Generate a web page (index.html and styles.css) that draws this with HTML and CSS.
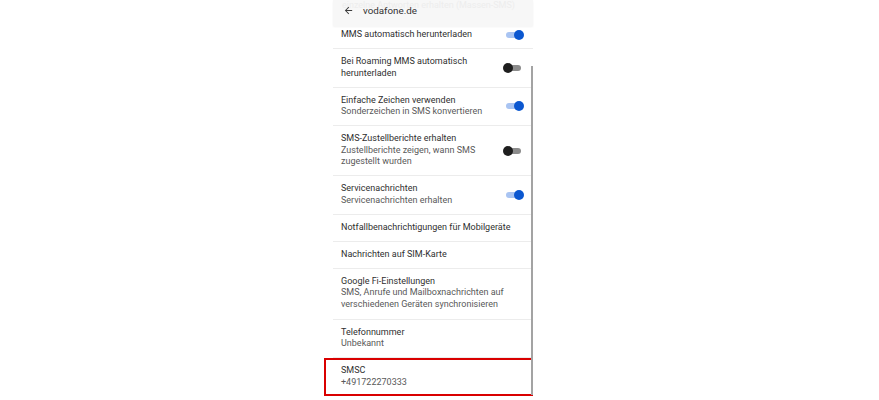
FILE: index.html
```html
<!DOCTYPE html>
<html lang="de">
<head>
<meta charset="utf-8">
<title>SMS-Einstellungen</title>
<link rel="stylesheet" href="styles.css">
</head>
<body>
<div class="stage">
  <div class="screen">
    <header class="appbar">
      <div class="ghost">einzelne Antworten erhalten (Massen-SMS)</div>
      <svg class="back" viewBox="0 0 24 24" width="11" height="11"><path d="M20 11H7.83l5.59-5.59L12 4l-8 8 8 8 1.41-1.41L7.83 13H20v-2z" fill="#3c3c3c"/></svg>
      <span class="title">vodafone.de</span>
    </header>
    <div class="list">
      <div class="row">
        <div class="text"><div class="t">MMS automatisch herunterladen</div></div>
        <span class="toggle on"><span class="track"></span><span class="thumb"></span></span>
      </div>
      <div class="row">
        <div class="text"><div class="t">Bei Roaming MMS automatisch herunterladen</div></div>
        <span class="toggle"><span class="track"></span><span class="thumb"></span></span>
      </div>
      <div class="row">
        <div class="text"><div class="t">Einfache Zeichen verwenden</div><div class="s">Sonderzeichen in SMS konvertieren</div></div>
        <span class="toggle on"><span class="track"></span><span class="thumb"></span></span>
      </div>
      <div class="row">
        <div class="text"><div class="t">SMS-Zustellberichte erhalten</div><div class="s">Zustellberichte zeigen, wann SMS zugestellt wurden</div></div>
        <span class="toggle"><span class="track"></span><span class="thumb"></span></span>
      </div>
      <div class="row">
        <div class="text"><div class="t">Servicenachrichten</div><div class="s">Servicenachrichten erhalten</div></div>
        <span class="toggle on"><span class="track"></span><span class="thumb"></span></span>
      </div>
      <div class="row">
        <div class="text"><div class="t">Notfallbenachrichtigungen für Mobilgeräte</div></div>
      </div>
      <div class="row">
        <div class="text"><div class="t">Nachrichten auf SIM-Karte</div></div>
      </div>
      <div class="row tall">
        <div class="text"><div class="t">Google Fi-Einstellungen</div><div class="s">SMS, Anrufe und Mailboxnachrichten auf verschiedenen Geräten synchronisieren</div></div>
      </div>
      <div class="row">
        <div class="text"><div class="t">Telefonnummer</div><div class="s">Unbekannt</div></div>
      </div>
      <div class="row marked">
        <div class="text"><div class="t">SMSC</div><div class="s">+491722270333</div></div>
      </div>
    </div>
    <div class="scrollbar"></div>
  </div>
</div>
</body>
</html>
```
FILE: styles.css
```css
html, body {
  margin: 0;
  padding: 0;
  background: #ffffff;
}
body {
  font-family: Roboto, "Noto Sans", "Liberation Sans", sans-serif;
  color: #2a2a2a;
}
.stage {
  width: 879px;
  height: 400px;
  overflow: hidden;
  display: flex;
  justify-content: flex-start;
  padding-left: 333px;
  box-sizing: border-box;
}
.screen {
  position: relative;
  width: 200px;
  height: 400px;
  background: #ffffff;
}
.appbar {
  position: absolute;
  top: 0;
  left: 0;
  right: 0;
  height: 26px;
  box-sizing: border-box;
  display: flex;
  align-items: center;
  padding: 0 0 6px 10px;
  background: rgba(247, 247, 247, 0.94);
  box-shadow: 0 1px 2px rgba(0, 0, 0, 0.05);
  z-index: 2;
  overflow: hidden;
}
.ghost {
  position: absolute;
  left: 9px;
  top: 0;
  font-size: 9px;
  line-height: 11px;
  color: #ededed;
  white-space: nowrap;
}
.back {
  position: relative;
  display: block;
  flex: none;
}
.title {
  position: relative;
  margin-left: 9px;
  font-size: 9.8px;
  color: #333;
}
.list {
  margin-top: 22px;
}
.row {
  position: relative;
  display: flex;
  align-items: center;
  gap: 10px;
  padding: 7.25px 9px 7.25px 8px;
  border-bottom: 1px solid #ececec;
}
.row.tall {
  padding-bottom: 8.25px;
}
.row:last-child {
  border-bottom: none;
}
.text {
  flex: 1;
  min-width: 0;
  font-size: 9px;
  line-height: 11.5px;
}
.t {
  color: #2f2f2f;
}
.s {
  color: #595959;
}
.toggle {
  position: relative;
  flex: none;
  width: 21px;
  height: 10px;
}
.track {
  position: absolute;
  left: 3px;
  top: 2px;
  width: 15px;
  height: 6px;
  border-radius: 3px;
  background: #8c8c8c;
}
.thumb {
  position: absolute;
  left: 0;
  top: 0;
  width: 10px;
  height: 10px;
  border-radius: 50%;
  background: #1e1e1e;
}
.toggle.on .track {
  background: #a9c4f2;
}
.toggle.on .thumb {
  left: 11px;
  background: #0b57d0;
}
.marked::after {
  content: "";
  position: absolute;
  left: -9px;
  right: 0;
  top: 0;
  bottom: 0;
  border: 2px solid #d90000;
}
.scrollbar {
  position: absolute;
  right: 0;
  top: 66px;
  width: 2px;
  height: 329px;
  background: #a3a3a3;
  z-index: 3;
}
```
